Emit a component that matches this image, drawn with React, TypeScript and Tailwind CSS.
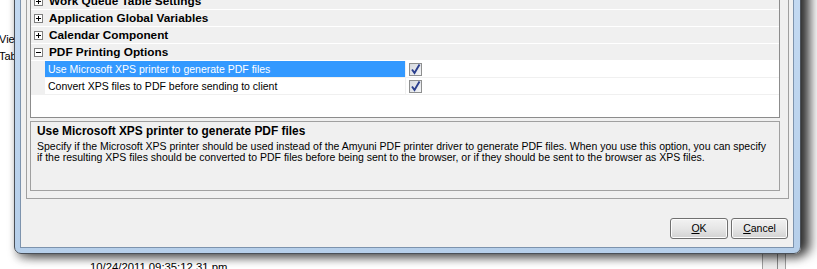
import React from "react";

type CatProps = { label: string; open?: boolean };
type PropProps = { label: string; selected?: boolean };

function ExpandBox({ open }: { open?: boolean }) {
  return (
    <span className="flex h-[9px] w-[9px] items-center justify-center border border-[#7f7f7f] bg-white">
      <svg width="7" height="7" viewBox="0 0 7 7">
        <path d="M1 3.5h5" stroke="#000" strokeWidth="1" />
        {!open && <path d="M3.5 1v5" stroke="#000" strokeWidth="1" />}
      </svg>
    </span>
  );
}

function CheckBox() {
  return (
    <span className="block h-[13px] w-[13px] border border-[#8e8f8f] bg-gradient-to-br from-[#d6d9df] to-[#f4f5f7]">
      <svg width="11" height="11" viewBox="0 0 11 11" className="overflow-visible">
        <path d="M2 5.5 L4.5 9 L9.5 0.5" fill="none" stroke="#2b3f8e" strokeWidth="1.9" />
      </svg>
    </span>
  );
}

function CategoryRow({ label, open }: CatProps) {
  return (
    <div className="flex h-[17px] items-center border-b border-white bg-[#f0f0f0] pl-[3px]">
      <ExpandBox open={open} />
      <span className="ml-[6px] text-[11.8px] leading-[16px] font-bold">{label}</span>
    </div>
  );
}

function PropertyRow({ label, selected }: PropProps) {
  return (
    <div className="flex h-[17px] border-b border-[#f0f0f0]">
      <div className="w-[14px] bg-[#f0f0f0]" />
      <div
        className={
          selected
            ? "flex w-[360px] items-center bg-[#3399ff] pl-[3px] text-white"
            : "flex w-[360px] items-center pl-[3px]"
        }
      >
        <span className="text-[10.5px] leading-[16px]">{label}</span>
      </div>
      <div className="w-px bg-[#f0f0f0]" />
      <div className="flex items-center pl-[3px]">
        <CheckBox />
      </div>
    </div>
  );
}

function WinButton({ label, w }: { label: React.ReactNode; w: string }) {
  return (
    <button
      className={`${w} h-[21px] rounded-[3px] border border-[#707070] bg-gradient-to-b from-[#f2f2f2] via-[#e6e6e6] to-[#d2d2d2] text-[10.5px] leading-[19px] shadow-[inset_0_0_0_1px_#fcfcfc]`}
    >
      {label}
    </button>
  );
}

export default function App() {
  return (
    <div className="relative h-[269px] w-[817px] overflow-hidden bg-white font-['Liberation_Sans',Arial,sans-serif] text-black">
      {/* desktop behind the dialog */}
      <span className="absolute left-[-1px] top-[31px] text-[11px]">View</span>
      <span className="absolute left-[-1px] top-[48px] text-[11px]">Table</span>
      <span className="absolute left-[90px] top-[259px] text-[11.3px]">10/24/2011 09:35:12.31 pm</span>
      <div className="absolute left-[762px] top-[254px] flex h-[20px] w-[24px] border-x border-[#a0a0a0] bg-[#ececec]">
        <div className="ml-[14px] h-full w-px bg-[#8a8a8a]" />
      </div>

      {/* dialog window */}
      <div className="absolute left-[14px] top-[-30px] w-[787px] rounded-b-[7px] border border-[#4a5058] bg-gradient-to-b from-[#c4daf2] to-[#b6cfea] pt-[4px] pr-[6px] pb-[5px] pl-[5px] shadow-[9px_0_12px_rgba(0,0,0,0.75),2px_5px_8px_rgba(0,0,0,0.35)]">
        <div className="border border-[#7d93ad] bg-[#f0f0f0]">
          <div className="mt-[10px] mr-[4px] ml-[5px] border border-[#a0a0a0] pt-[5px] pr-[8px] pb-[7px] pl-[3px]">
            <div className="h-[126px] border border-[#8c8c8c] bg-white">
              <CategoryRow label="Work Queue Table  Settings" />
              <CategoryRow label="Application Global Variables" />
              <CategoryRow label="Calendar Component" />
              <CategoryRow label="PDF Printing Options" open />
              <PropertyRow label="Use Microsoft XPS printer to generate PDF files" selected />
              <PropertyRow label="Convert XPS files to PDF before sending to client" />
            </div>
            <div className="mt-[3px] h-[70px] border border-[#a0a0a0] bg-[#f0f0f0] pt-[2px] pl-[6px]">
              <p className="text-[11.9px] leading-[14px] font-bold">Use Microsoft XPS printer to generate PDF files</p>
              <p className="mt-[3px] text-[10.5px] leading-[11px]">
                Specify if the Microsoft XPS printer should be used instead of the Amyuni PDF printer driver to generate PDF files. When you use this option, you can specify
                <br />
                if the resulting XPS files should be converted to PDF files before being sent to the browser, or if they should be sent to the browser as XPS files.
              </p>
            </div>
          </div>
          <div className="mt-[19px] mb-[8px] flex justify-end gap-[3px] pr-[5px]">
            <WinButton w="w-[58px]" label={<><span className="underline">O</span>K</>} />
            <WinButton w="w-[57px]" label={<><span className="underline">C</span>ancel</>} />
          </div>
        </div>
      </div>
    </div>
  );
}
